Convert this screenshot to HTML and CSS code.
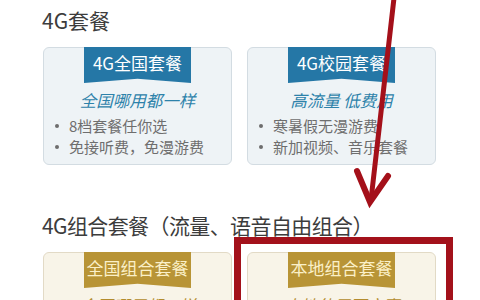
FILE: index.html
```html
<!DOCTYPE html>
<html lang="zh-CN">
<head>
<meta charset="utf-8">
<title>4G套餐</title>
<link rel="stylesheet" href="styles.css">
</head>
<body>
<div class="page">
  <h2 class="section-title">4G套餐</h2>
  <div class="card-row">
    <div class="card blue">
      <div class="ribbon">4G全国套餐</div>
      <div class="slogan">全国哪用都一样</div>
      <ul class="points">
        <li>8档套餐任你选</li>
        <li>免接听费，免漫游费</li>
      </ul>
    </div>
    <div class="card blue">
      <div class="ribbon">4G校园套餐</div>
      <div class="slogan">高流量 低费用</div>
      <ul class="points">
        <li>寒暑假无漫游费</li>
        <li>新加视频、音乐套餐</li>
      </ul>
    </div>
  </div>

  <h2 class="section-title second">4G组合套餐（流量、语音自由组合）</h2>
  <div class="card-row">
    <div class="card gold">
      <div class="ribbon">全国组合套餐</div>
      <div class="slogan">全国哪用都一样</div>
      <ul class="points">
        <li>流量语音自由组合</li>
        <li>免接听费，免漫游费</li>
      </ul>
    </div>
    <div class="card gold">
      <div class="ribbon">本地组合套餐</div>
      <div class="slogan">本地使用更实惠</div>
      <ul class="points">
        <li>流量语音自由组合</li>
        <li>本地资费更优惠</li>
      </ul>
    </div>
  </div>
</div>

<div class="highlight-box"></div>
<svg class="arrow" width="480" height="300" viewBox="0 0 480 300" xmlns="http://www.w3.org/2000/svg">
  <line x1="394" y1="-2" x2="371" y2="200" stroke="#a4101a" stroke-width="5" stroke-linecap="round"/>
  <polyline points="357,171 370,202 388,176" fill="none" stroke="#a4101a" stroke-width="6" stroke-linejoin="miter" stroke-linecap="round"/>
</svg>
</body>
</html>
```
FILE: styles.css
```css
html, body {
  margin: 0;
  padding: 0;
  background: #ffffff;
  width: 480px;
  height: 300px;
  overflow: hidden;
}

body {
  position: relative;
  font-family: "Noto Sans CJK SC", "Noto Sans", sans-serif;
}

.page {
  padding-left: 43px;
}

.section-title {
  margin: 8px 0 15px 0;
  font-size: 21px;
  line-height: 24px;
  font-weight: 400;
  color: #3c3c3c;
  margin-left: -1px;
}

.section-title.second {
  margin-top: 48px;
  letter-spacing: -0.6px;
}

.card-row {
  display: flex;
  gap: 15px;
}

.card {
  box-sizing: border-box;
  width: 189px;
  height: 118px;
  border-radius: 6px;
  border: 1px solid #d3dce2;
  background: #eef3f6;
  display: flex;
  flex-direction: column;
  align-items: center;
}

.ribbon {
  width: 107px;
  height: 36px;
  margin-top: -1px;
  background: #2577a6;
  color: #ffffff;
  font-size: 17px;
  line-height: 32px;
  text-align: center;
  clip-path: polygon(0 0, 100% 0, 100% 100%, 50% 88%, 0 100%);
}

.slogan {
  margin-top: 7px;
  font-size: 16.5px;
  line-height: 21px;
  font-style: italic;
  color: #2d82aa;
  white-space: nowrap;
}

.points {
  list-style: none;
  margin: 4px 0 0 0;
  padding: 0 0 0 25px;
  align-self: stretch;
}

.points li {
  position: relative;
  font-size: 15px;
  line-height: 21px;
  color: #6e6e6e;
  white-space: nowrap;
}

.points li::before {
  content: "";
  position: absolute;
  left: -14px;
  top: 9px;
  width: 4px;
  height: 4px;
  border-radius: 50%;
  background: #6d6d6d;
}

.card.gold {
  background: #f8f4e8;
  border-color: #e2dac6;
}

.card.gold .ribbon {
  background: #b89436;
  color: #fbf0c8;
}

.card.gold .slogan {
  color: #b38c2e;
}

.highlight-box {
  position: absolute;
  left: 234px;
  top: 237px;
  width: 219px;
  height: 120px;
  box-sizing: border-box;
  border: 7px solid #a3111b;
}

.arrow {
  position: absolute;
  left: 0;
  top: 0;
  pointer-events: none;
}
```
